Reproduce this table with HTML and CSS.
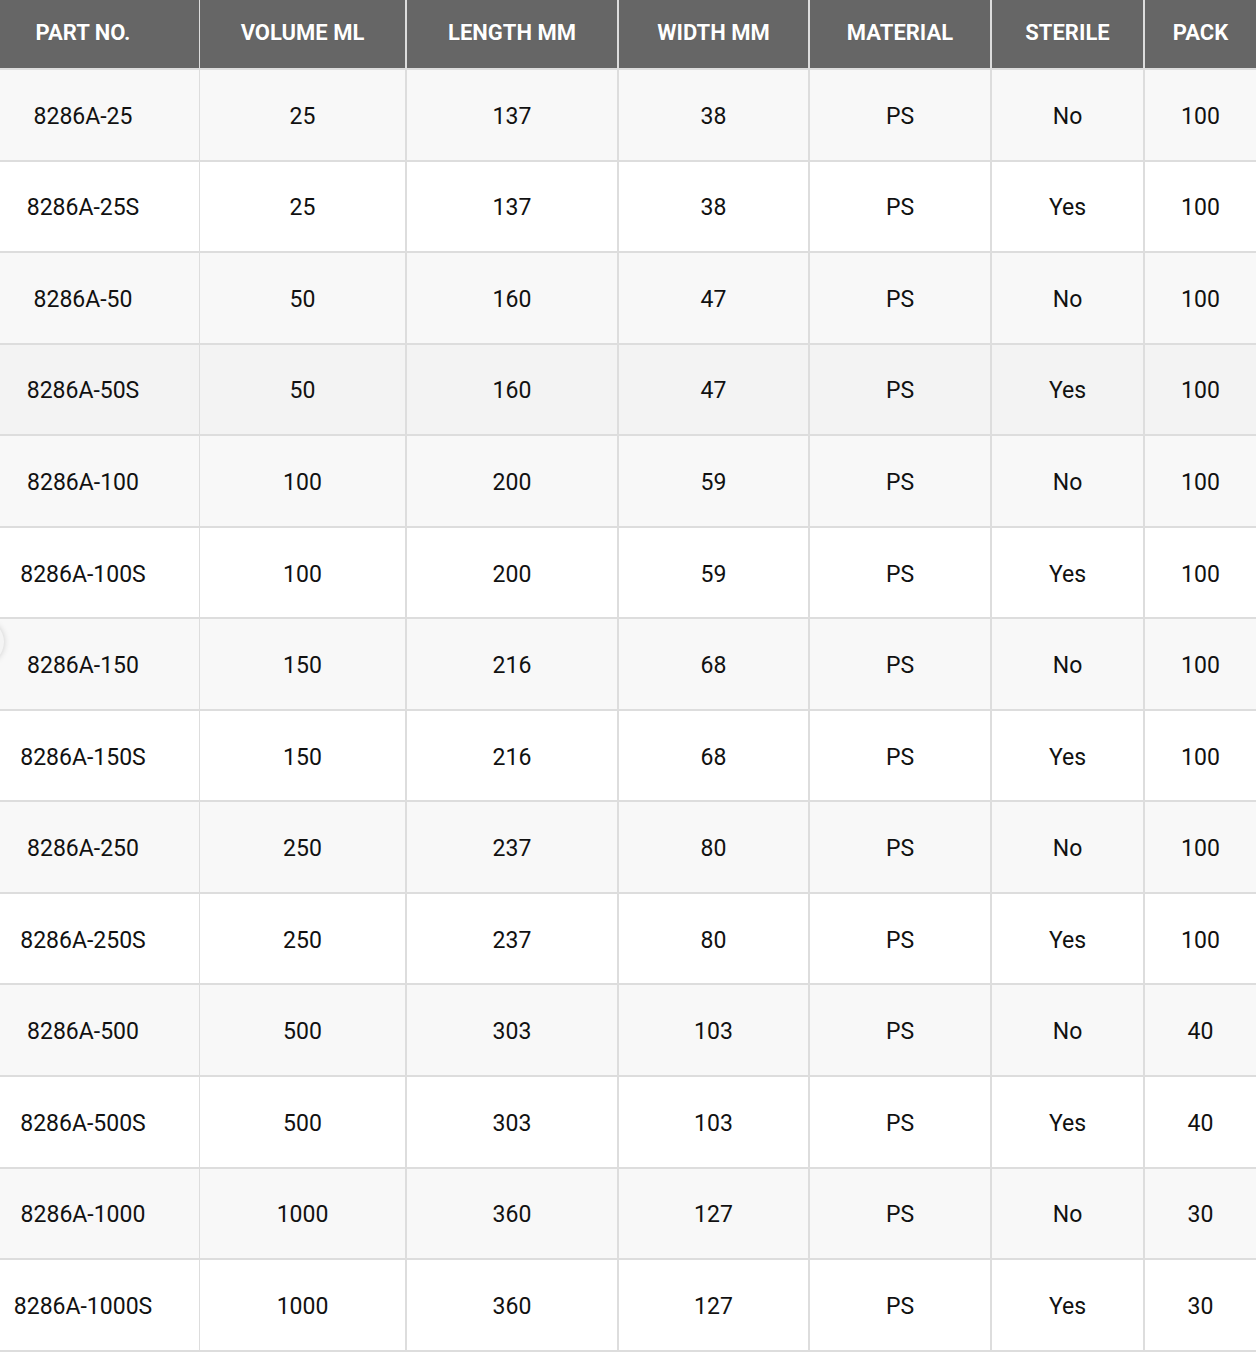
FILE: index.html
```html
<!DOCTYPE html>
<html>
<head>
<meta charset="utf-8">
<link rel="stylesheet" href="styles.css">
</head>
<body>
<div class="wrap">
<table class="spec">
  <colgroup>
    <col class="c1"><col class="c2"><col class="c3"><col class="c4"><col class="c5"><col class="c6"><col class="c7">
  </colgroup>
  <thead>
    <tr><th>PART NO.</th><th>VOLUME ML</th><th>LENGTH MM</th><th>WIDTH MM</th><th>MATERIAL</th><th>STERILE</th><th>PACK</th></tr>
  </thead>
  <tbody>
    <tr><td>8286A-25</td><td>25</td><td>137</td><td>38</td><td>PS</td><td>No</td><td>100</td></tr>
    <tr><td>8286A-25S</td><td>25</td><td>137</td><td>38</td><td>PS</td><td>Yes</td><td>100</td></tr>
    <tr><td>8286A-50</td><td>50</td><td>160</td><td>47</td><td>PS</td><td>No</td><td>100</td></tr>
    <tr class="hover"><td>8286A-50S</td><td>50</td><td>160</td><td>47</td><td>PS</td><td>Yes</td><td>100</td></tr>
    <tr><td>8286A-100</td><td>100</td><td>200</td><td>59</td><td>PS</td><td>No</td><td>100</td></tr>
    <tr><td>8286A-100S</td><td>100</td><td>200</td><td>59</td><td>PS</td><td>Yes</td><td>100</td></tr>
    <tr><td>8286A-150</td><td>150</td><td>216</td><td>68</td><td>PS</td><td>No</td><td>100</td></tr>
    <tr><td>8286A-150S</td><td>150</td><td>216</td><td>68</td><td>PS</td><td>Yes</td><td>100</td></tr>
    <tr><td>8286A-250</td><td>250</td><td>237</td><td>80</td><td>PS</td><td>No</td><td>100</td></tr>
    <tr><td>8286A-250S</td><td>250</td><td>237</td><td>80</td><td>PS</td><td>Yes</td><td>100</td></tr>
    <tr><td>8286A-500</td><td>500</td><td>303</td><td>103</td><td>PS</td><td>No</td><td>40</td></tr>
    <tr><td>8286A-500S</td><td>500</td><td>303</td><td>103</td><td>PS</td><td>Yes</td><td>40</td></tr>
    <tr><td>8286A-1000</td><td>1000</td><td>360</td><td>127</td><td>PS</td><td>No</td><td>30</td></tr>
    <tr><td>8286A-1000S</td><td>1000</td><td>360</td><td>127</td><td>PS</td><td>Yes</td><td>30</td></tr>
  </tbody>
</table>
<div class="blob"></div>
</div>
</body>
</html>
```

FILE: styles.css
```css
html, body {
  margin: 0;
  padding: 0;
  background: #fff;
  overflow: hidden;
}
.wrap {
  position: relative;
  width: 1256px;
  height: 1354px;
  overflow: hidden;
}
.spec {
  margin-left: -33px;
  width: 1289px;
  table-layout: fixed;
  border-collapse: separate;
  border-spacing: 0;
  font-family: Roboto, "Liberation Sans", sans-serif;
}
.c1 { width: 233px; }
.c2 { width: 207px; }
.c3 { width: 212px; }
.c4 { width: 191px; }
.c5 { width: 182px; }
.c6 { width: 153px; }
.c7 { width: 111px; }

.spec th {
  background: #666;
  color: #fff;
  font-weight: 700;
  font-size: 22px;
  height: 70px;
  padding: 0 0 4px 0;
  box-sizing: border-box;
  text-align: center;
  vertical-align: middle;
  border-right: 2px solid #ddd;
  border-bottom: 2px solid #ddd;
  text-shadow: 0 0 1px rgba(0,0,0,0.25);
}
.spec th:last-child, .spec td:last-child { border-right: none; }

.spec td {
  height: 91.55px;
  box-sizing: border-box;
  padding: 3px 0 0 0;
  font-size: 23px;
  color: #111;
  text-align: center;
  vertical-align: middle;
  border-right: 2px solid #ddd;
  border-bottom: 2px solid #ddd;
}
.spec td:first-child, .spec th:first-child { border-right-width: 1px; }
.spec tbody tr:nth-child(odd) td { background: #f8f8f8; }
.spec tbody tr:nth-child(even) td { background: #fff; }
.spec tbody tr.hover td { background: #f3f3f3; }

.blob {
  position: absolute;
  left: -40px;
  top: 620px;
  width: 44px;
  height: 44px;
  border-radius: 50%;
  background: #f4f4f4;
  box-shadow: 0 0 6px rgba(0,0,0,0.18);
}
```
